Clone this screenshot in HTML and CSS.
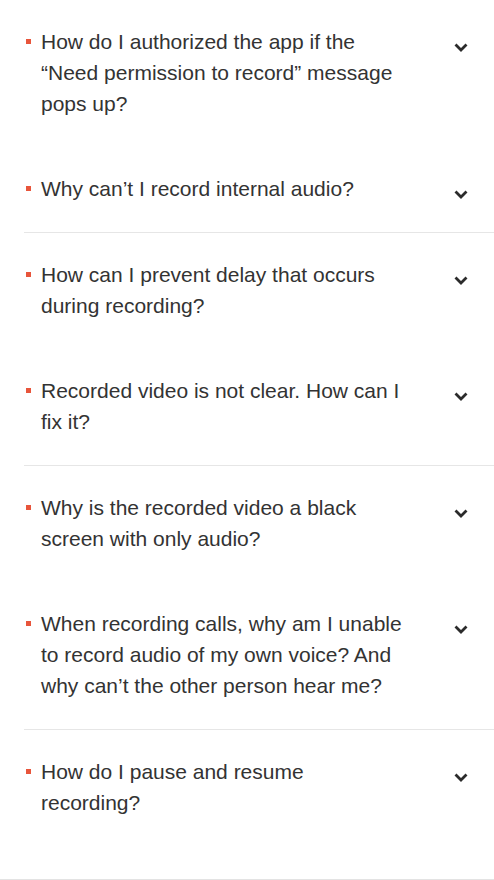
FILE: index.html
```html
<!DOCTYPE html>
<html lang="en">
<head>
<meta charset="utf-8">
<title>FAQ</title>
<link rel="stylesheet" href="styles.css">
</head>
<body>
<div class="faq">
  <div class="group">
    <div class="item"><span class="bullet"></span><p class="q">How do I authorized the app if the “Need permission to record” message pops up?</p><svg class="chev" viewBox="0 0 14 9"><path d="M1.5 1.5 L7 7 L12.5 1.5"/></svg></div>
    <div class="item"><span class="bullet"></span><p class="q">Why can’t I record internal audio?</p><svg class="chev" viewBox="0 0 14 9"><path d="M1.5 1.5 L7 7 L12.5 1.5"/></svg></div>
  </div>
  <div class="group">
    <div class="item"><span class="bullet"></span><p class="q">How can I prevent delay that occurs during recording?</p><svg class="chev" viewBox="0 0 14 9"><path d="M1.5 1.5 L7 7 L12.5 1.5"/></svg></div>
    <div class="item"><span class="bullet"></span><p class="q">Recorded video is not clear. How can I fix it?</p><svg class="chev" viewBox="0 0 14 9"><path d="M1.5 1.5 L7 7 L12.5 1.5"/></svg></div>
  </div>
  <div class="group">
    <div class="item"><span class="bullet"></span><p class="q">Why is the recorded video a black screen with only audio?</p><svg class="chev" viewBox="0 0 14 9"><path d="M1.5 1.5 L7 7 L12.5 1.5"/></svg></div>
    <div class="item"><span class="bullet"></span><p class="q">When recording calls, why am I unable to record audio of my own voice? And why can’t the other person hear me?</p><svg class="chev" viewBox="0 0 14 9"><path d="M1.5 1.5 L7 7 L12.5 1.5"/></svg></div>
  </div>
  <div class="group last">
    <div class="item"><span class="bullet"></span><p class="q">How do I pause and resume recording?</p><svg class="chev" viewBox="0 0 14 9"><path d="M1.5 1.5 L7 7 L12.5 1.5"/></svg></div>
  </div>
</div>
<div class="footer-line"></div>
</body>
</html>
```
FILE: styles.css
```css
html, body {
  margin: 0;
  padding: 0;
  background: #fff;
}
body {
  font-family: "Liberation Sans", Arial, Helvetica, sans-serif;
  color: #333;
  width: 494px;
  overflow: hidden;
}
.faq {
  margin-left: 24px;
}
.group {
  border-bottom: 1px solid #e6e6e6;
}
.group.last {
  border-bottom: none;
  padding-bottom: 33px;
}
.item {
  display: flex;
  align-items: flex-start;
  padding: 26px 0 28px 0;
}
.bullet {
  flex: none;
  width: 5px;
  height: 5px;
  background: #e8553b;
  margin: 13px 10px 0 2px;
}
.q {
  margin: 0;
  width: 366px;
  font-size: 21px;
  line-height: 31px;
  flex: none;
}
.chev {
  flex: none;
  width: 14px;
  height: 9px;
  margin: 17px 0 0 47px;
  fill: none;
  stroke: #2b2b2b;
  stroke-width: 2.8;
  stroke-linecap: butt;
  stroke-linejoin: miter;
}
.footer-line {
  height: 1px;
  background: #e3e3e3;
}
```
